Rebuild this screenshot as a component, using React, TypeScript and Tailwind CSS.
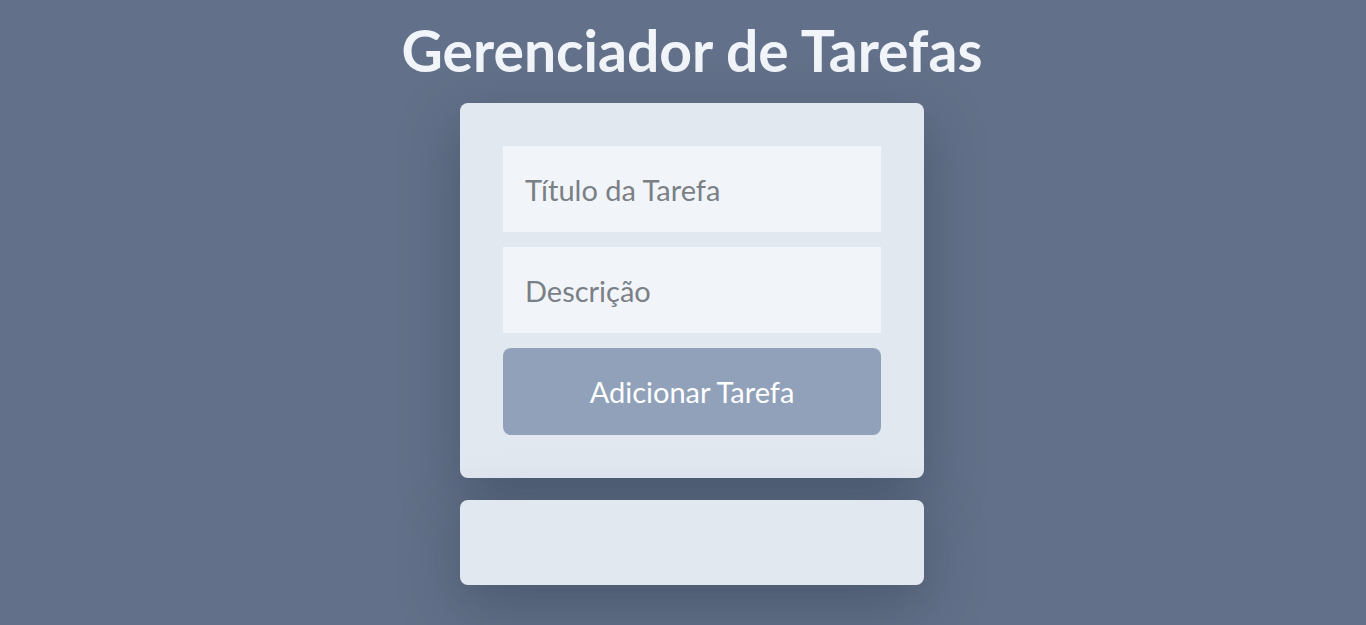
import React from 'react'

const App: React.FC = () => {
  return (
    <div
      className="min-h-screen w-full bg-[#627189] flex flex-col items-center pt-[10px] pl-[18px]"
      style={{ fontFamily: '"Lato", "Noto Sans", sans-serif' }}
    >
      <h1 className="text-[57px] leading-[80px] font-bold text-slate-100 h-[93px]">
        Gerenciador de Tarefas
      </h1>

      <div className="w-[464px] bg-slate-200 rounded-lg p-[43px] flex flex-col gap-[15px] shadow-[0_20px_60px_rgba(30,41,59,0.35)]">
        <input
          type="text"
          placeholder="Título da Tarefa"
          className="h-[86px] w-full bg-slate-100 px-[22px] text-[29px] text-slate-700 placeholder:text-[#7b7f86] outline-none"
        />
        <input
          type="text"
          placeholder="Descrição"
          className="h-[86px] w-full bg-slate-100 px-[22px] text-[29px] text-slate-700 placeholder:text-[#7b7f86] outline-none"
        />
        <button className="h-[87px] w-full bg-slate-400 rounded-lg text-white text-[29px]">
          Adicionar Tarefa
        </button>
      </div>

      <div className="mt-[22px] w-[464px] h-[85px] bg-slate-200 rounded-lg shadow-[0_20px_60px_rgba(30,41,59,0.35)]" />
    </div>
  )
}

export default App
